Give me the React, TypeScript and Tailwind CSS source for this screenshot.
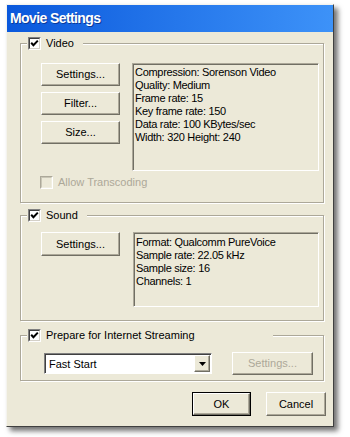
import React from "react";

const font = { fontFamily: '"Liberation Sans", Arial, sans-serif' };

function Check({ disabled }: { disabled?: boolean }) {
  if (disabled) {
    return (
      <span className="flex h-[13px] w-[13px] shrink-0 border border-t-[#aca899] border-l-[#aca899] border-b-white border-r-white">
        <span className="flex-1 border border-t-[#c9c6b6] border-l-[#c9c6b6] border-b-[#f1efe2] border-r-[#f1efe2] bg-[#ece9d8]" />
      </span>
    );
  }
  return (
    <span className="flex h-[13px] w-[13px] shrink-0 border border-t-[#808080] border-l-[#808080] border-b-white border-r-white">
      <span className="flex flex-1 items-center justify-center border border-t-[#404040] border-l-[#404040] border-b-[#d4d0c8] border-r-[#d4d0c8] bg-white">
        <svg width="9" height="9" viewBox="0 0 9 9">
          <polyline points="1.2,3.8 3.4,6.2 7.8,1.6" fill="none" stroke="#000" strokeWidth="2" />
        </svg>
      </span>
    </span>
  );
}

function Btn({ children, className, disabled }: { children: React.ReactNode; className: string; disabled?: boolean }) {
  return (
    <div
      className={
        "flex items-center justify-center border border-t-white border-l-white border-r-[#716f64] border-b-[#716f64] bg-[#ece9d8] text-[11px] shadow-[inset_-1px_-1px_0_#aca899] " +
        (disabled ? "text-[#aca899] " : "text-black ") +
        className
      }
    >
      {children}
    </div>
  );
}

function InfoBox({ lines, className }: { lines: string[]; className: string }) {
  return (
    <div
      className={
        "border border-t-[#aca899] border-l-[#aca899] border-b-white border-r-white bg-[#ece9d8] pl-[2px] pt-[2px] text-[11px] leading-[13px] tracking-[-0.3px] text-black shadow-[inset_1px_1px_0_#716f64] " +
        className
      }
    >
      {lines.map((l) => (
        <div key={l}>{l}</div>
      ))}
    </div>
  );
}

function Legend({ label, w }: { label: string; w: string }) {
  return (
    <div className={"absolute left-[6px] top-[-8px] flex h-[14px] items-center gap-[5px] bg-[#ece9d8] pl-[1px] text-[11px] leading-[13px] text-black " + w}>
      <Check />
      <span>{label}</span>
    </div>
  );
}

export default function App() {
  return (
    <div className="h-[437px] w-[350px] overflow-hidden bg-white pt-[4px]" style={font}>
      <div className="ml-[6px] flex h-[423px] w-[328px] flex-col border border-t-[#f4f3ee] border-l-[#f4f3ee] border-r-[#404040] border-b-[#404040] bg-[#ece9d8] shadow-[4px_4px_5px_rgba(0,0,0,0.55)]">
        {/* title bar */}
        <div className="flex h-[27px] items-center bg-linear-to-r from-[#0a58dc] to-[#3d92f8] pl-[3px] text-[14px] font-bold tracking-[-0.6px] text-white [text-shadow:1px_1px_0_#0a3a9a]">
          Movie Settings
        </div>

        <div className="flex flex-col pl-[13px]">
          {/* Video */}
          <div className="relative mt-[11px] h-[160px] w-[304px] border border-[#aca899] pl-[20px] pt-[19px] shadow-[1px_1px_0_#fff,inset_1px_1px_0_#fff]">
            <Legend label="Video" w="w-[56px]" />
            <div className="flex gap-[12px]">
              <div className="flex w-[79px] flex-col gap-[6px]">
                <Btn className="h-[23px]">Settings...</Btn>
                <Btn className="h-[23px]">Filter...</Btn>
                <Btn className="h-[23px]">Size...</Btn>
              </div>
              <InfoBox
                className="h-[108px] w-[187px]"
                lines={[
                  "Compression: Sorenson Video",
                  "Quality: Medium",
                  "Frame rate: 15",
                  "Key frame rate: 150",
                  "Data rate: 100 KBytes/sec",
                  "Width: 320 Height: 240",
                ]}
              />
            </div>
            <div className="-ml-[1px] mt-[5px] flex h-[13px] items-center gap-[5px] text-[11px] leading-[13px] text-[#aca899]">
              <Check disabled />
              <span>Allow Transcoding</span>
            </div>
          </div>

          {/* Sound */}
          <div className="relative mt-[12px] h-[106px] w-[304px] border border-[#aca899] pl-[20px] pt-[16px] shadow-[1px_1px_0_#fff,inset_1px_1px_0_#fff]">
            <Legend label="Sound" w="w-[60px]" />
            <div className="flex gap-[13px]">
              <Btn className="h-[24px] w-[79px]">Settings...</Btn>
              <InfoBox
                className="h-[75px] w-[186px] pt-[3px]"
                lines={["Format: Qualcomm PureVoice", "Sample rate: 22.05 kHz", "Sample size: 16", "Channels: 1"]}
              />
            </div>
          </div>

          {/* Streaming */}
          <div className="relative mt-[14px] h-[46px] w-[304px] border border-[#aca899] pl-[23px] pt-[16px] shadow-[1px_1px_0_#fff,inset_1px_1px_0_#fff]">
            <Legend label="Prepare for Internet Streaming" w="w-[246px]" />
            <div className="flex items-center gap-[20px]">
              <div className="flex h-[21px] w-[168px] border border-t-[#808080] border-l-[#808080] border-b-white border-r-white bg-white shadow-[inset_1px_1px_0_#404040]">
                <div className="flex flex-1 items-center pl-[4px] pt-[1px] text-[11px] text-black">Fast Start</div>
                <div className="my-[1px] mr-[1px] flex w-[16px] items-center justify-center border border-t-white border-l-white border-r-[#716f64] border-b-[#716f64] bg-[#ece9d8] shadow-[inset_-1px_-1px_0_#aca899]">
                  <svg width="7" height="4" viewBox="0 0 7 4">
                    <polygon points="0,0 7,0 3.5,4" fill="#000" />
                  </svg>
                </div>
              </div>
              <Btn disabled className="h-[23px] w-[81px]">
                Settings...
              </Btn>
            </div>
          </div>

          {/* OK / Cancel */}
          <div className="mt-[11px] flex justify-end gap-[15px] pr-[7px]">
            <div className="flex h-[24px] w-[59px] border border-black">
              <Btn className="flex-1">OK</Btn>
            </div>
            <Btn className="h-[24px] w-[60px]">Cancel</Btn>
          </div>
        </div>
      </div>
    </div>
  );
}
